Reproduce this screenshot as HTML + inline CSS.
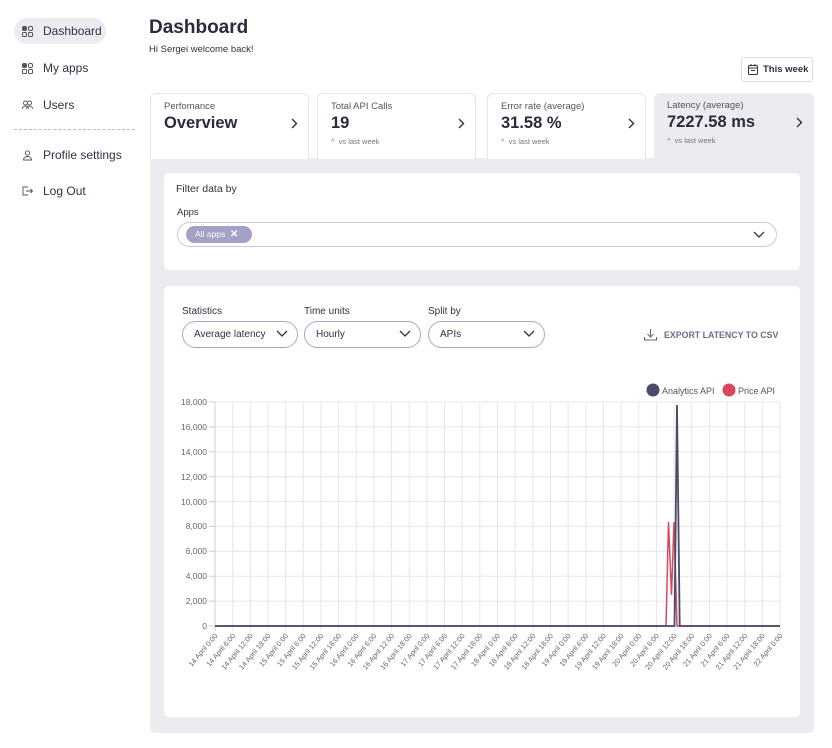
<!DOCTYPE html>
<html><head><meta charset="utf-8"><style>
*{box-sizing:border-box;margin:0;padding:0}
body{width:832px;height:748px;background:#fff;font-family:"Liberation Sans",sans-serif;color:#2f3142;position:relative;overflow:hidden}
.a{position:absolute}
.nav{position:absolute;left:14px;height:26px;width:92px;font-size:12px;color:#2f3142;display:flex;align-items:center;padding-left:8px;white-space:nowrap}
.nav svg{margin-right:10px}
.card{position:absolute;top:93px;height:66px;background:#fff;border:1px solid #e4e5ea;border-bottom:none;border-radius:6px 6px 0 0}
.card .t{position:absolute;left:13px;top:7px;font-size:9.5px;color:#555}
.card .v{position:absolute;left:13px;top:20px;font-size:16.5px;font-weight:bold;color:#2a2c3c}
.card .s{position:absolute;left:13px;top:43px;font-size:7.5px;color:#777}
.card .c{position:absolute;right:10px;top:24px}
.sel{position:absolute;top:321px;height:27px;border:1px solid #a9a6cc;border-radius:14px;font-size:10px;color:#2f3142;padding:7px 0 0 11px}
.sel svg{position:absolute;right:9px;top:8px}
.lbl{position:absolute;top:306px;font-size:10px;color:#2f3142}
</style></head><body>
<div class="nav" style="top:18px;background:#ebecf2;border-radius:13px">
<svg width="11" height="11" viewBox="0 0 11 11" fill="none" stroke="#555" stroke-width="1"><rect x=".5" y=".5" width="4" height="4" rx="1.5" fill="#555"/><rect x="6.5" y=".5" width="4" height="4" rx="1.5"/><rect x=".5" y="6.5" width="4" height="4" rx="1"/><rect x="6.5" y="6.5" width="4" height="4" rx="1"/></svg>Dashboard</div>
<div class="nav" style="top:55px">
<svg width="11" height="11" viewBox="0 0 11 11" fill="none" stroke="#555" stroke-width="1"><rect x=".5" y=".5" width="4" height="4" rx="1.5" fill="#555"/><rect x="6.5" y=".5" width="4" height="4" rx="1.5"/><rect x=".5" y="6.5" width="4" height="4" rx="1"/><rect x="6.5" y="6.5" width="4" height="4" rx="1"/></svg>My apps</div>
<div class="nav" style="top:92px">
<svg width="11" height="10" viewBox="0 0 11 10" fill="none" stroke="#555" stroke-width="0.9"><circle cx="3.5" cy="3" r="2"/><circle cx="7.5" cy="3" r="2"/><path d="M.5 9c0-2 1.5-3 3-3s3 1 3 3M4.5 9c0-2 1.5-3 3-3s3 1 3 3"/></svg>Users</div>
<div class="a" style="left:14px;top:129px;width:121px;border-top:1px dashed #bbb"></div>
<div class="nav" style="top:142px;width:130px">
<svg width="11" height="11" viewBox="0 0 11 11" fill="none" stroke="#555" stroke-width="0.9"><circle cx="5.5" cy="3" r="2.2"/><path d="M1.5 10c0-2.5 2-3.5 4-3.5s4 1 4 3.5z"/></svg>Profile settings</div>
<div class="nav" style="top:178px">
<svg width="11" height="10" viewBox="0 0 11 10" fill="none" stroke="#555" stroke-width="0.9"><path d="M6 1H1v8h5M4 5h6.5M8.5 3l2 2-2 2"/></svg>Log Out</div>

<div class="a" style="left:149px;top:17px;font-size:19px;font-weight:bold;color:#2a2c3c">Dashboard</div>
<div class="a" style="left:149px;top:44px;font-size:9.5px;color:#2f3142">Hi Sergei welcome back!</div>
<div class="a" style="left:741px;top:57px;width:72px;height:25px;border:1px solid #ddd;border-radius:3px;font-size:9.5px;font-weight:bold;padding:6px 0 0 21px">
<svg class="a" style="left:6px;top:6px" width="10" height="11" viewBox="0 0 10 11" fill="none" stroke="#333" stroke-width="1"><rect x=".5" y="1.5" width="9" height="9" rx="1"/><path d="M.5 4h9M3 6.5h4M3 0v2M7 0v2"/></svg>This week</div>

<div class="a" style="left:150px;top:158px;width:664px;height:575px;background:#ebecf0;border-radius:0 0 5px 5px"></div>
<div class="a" style="left:654px;top:93px;width:160px;height:66px;background:#ebecf0;border-radius:6px 6px 0 0"></div>
<div class="card" style="left:150px;width:159px"><div class="t">Perfomance</div><div class="v">Overview</div><svg class="c" width="7" height="11" viewBox="0 0 7 11" fill="none" stroke="#333" stroke-width="1.4"><path d="M1 1l4.5 4.5L1 10"/></svg></div>
<div class="card" style="left:317px;width:159px"><div class="t">Total API Calls</div><div class="v">19</div><div class="s">^ &nbsp;vs last week</div><svg class="c" width="7" height="11" viewBox="0 0 7 11" fill="none" stroke="#333" stroke-width="1.4"><path d="M1 1l4.5 4.5L1 10"/></svg></div>
<div class="card" style="left:487px;width:159px"><div class="t">Error rate (average)</div><div class="v">31.58 %</div><div class="s">^ &nbsp;vs last week</div><svg class="c" width="7" height="11" viewBox="0 0 7 11" fill="none" stroke="#333" stroke-width="1.4"><path d="M1 1l4.5 4.5L1 10"/></svg></div>
<div class="card" style="left:654px;width:159px;background:transparent;border:none"><div class="t">Latency (average)</div><div class="v">7227.58 ms</div><div class="s">^ &nbsp;vs last week</div><svg class="c" width="7" height="11" viewBox="0 0 7 11" fill="none" stroke="#333" stroke-width="1.4"><path d="M1 1l4.5 4.5L1 10"/></svg></div>

<div class="a" style="left:164px;top:173px;width:636px;height:97px;background:#fff;border-radius:5px"></div>
<div class="a" style="left:176px;top:183px;font-size:10.5px;color:#2f3142">Filter data by</div>
<div class="a" style="left:177px;top:207px;font-size:9.5px;color:#2f3142">Apps</div>
<div class="a" style="left:177px;top:222px;width:600px;height:25px;border:1px solid #c9c7e0;border-radius:13px"></div>
<div class="a" style="left:186px;top:226px;width:66px;height:17px;background:#a3a1c6;border-radius:9px;color:#fff;font-size:8.5px;padding:3px 0 0 9px">All apps &nbsp;<b style="font-size:10px">✕</b></div>
<svg class="a" style="left:753px;top:231px" width="12" height="7" viewBox="0 0 12 7" fill="none" stroke="#333" stroke-width="1.3"><path d="M1 1l5 5 5-5"/></svg>

<div class="a" style="left:164px;top:286px;width:636px;height:431px;background:#fff;border-radius:5px"></div>
<div class="lbl" style="left:182px">Statistics</div>
<div class="lbl" style="left:304px">Time units</div>
<div class="lbl" style="left:428px">Split by</div>
<div class="sel" style="left:182px;width:116px">Average latency<svg width="12" height="7" viewBox="0 0 12 7" fill="none" stroke="#333" stroke-width="1.3"><path d="M1 1l5 5 5-5"/></svg></div>
<div class="sel" style="left:304px;width:117px">Hourly<svg width="12" height="7" viewBox="0 0 12 7" fill="none" stroke="#333" stroke-width="1.3"><path d="M1 1l5 5 5-5"/></svg></div>
<div class="sel" style="left:428px;width:117px">APIs<svg width="12" height="7" viewBox="0 0 12 7" fill="none" stroke="#333" stroke-width="1.3"><path d="M1 1l5 5 5-5"/></svg></div>
<svg class="a" style="left:644px;top:328px" width="13" height="13" viewBox="0 0 13 13" fill="none" stroke="#666" stroke-width="1"><path d="M6.5 1v8M3.5 6l3 3 3-3M.5 9v3h12V9"/></svg>
<div class="a" style="left:664px;top:330px;font-size:8.8px;font-weight:bold;color:#6e6c8a">EXPORT LATENCY TO CSV</div>

<svg class="a" style="left:0;top:0" width="832" height="748" font-family="Liberation Sans, sans-serif">
<g stroke="#e6e6e6" stroke-width="1">
<path d="M215 402H780M215 426.9H780M215 451.8H780M215 476.7H780M215 501.6H780M215 526.4H780M215 551.3H780M215 576.2H780M215 601.1H780"/>
<path d="M232.7 402V631M250.3 402V631M268 402V631M285.6 402V631M303.3 402V631M320.9 402V631M338.6 402V631M356.2 402V631M373.9 402V631M391.6 402V631M409.2 402V631M426.9 402V631M444.5 402V631M462.2 402V631M479.8 402V631M497.5 402V631M515.2 402V631M532.8 402V631M550.5 402V631M568.1 402V631M585.8 402V631M603.4 402V631M621.1 402V631M638.7 402V631M656.4 402V631M674.1 402V631M691.7 402V631M709.4 402V631M727 402V631M744.7 402V631M762.3 402V631M780 402V631"/>
<path d="M209 402H215M209 426.9H215M209 451.8H215M209 476.7H215M209 501.6H215M209 526.4H215M209 551.3H215M209 576.2H215M209 601.1H215M209 626H215" stroke="#ccc"/>
<path d="M215 402V631" stroke="#ccc"/>
</g>
<g font-size="8.5" fill="#666" text-anchor="end">
<text x="207" y="405">18,000</text><text x="207" y="430">16,000</text><text x="207" y="455">14,000</text><text x="207" y="480">12,000</text><text x="207" y="505">10,000</text><text x="207" y="529">8,000</text><text x="207" y="554">6,000</text><text x="207" y="579">4,000</text><text x="207" y="604">2,000</text><text x="207" y="629">0</text>
</g>
<g font-size="7.3" fill="#666" text-anchor="end">
<text transform="translate(218,636) rotate(-50)">14 April 0:00</text>
<text transform="translate(235.7,636) rotate(-50)">14 April 6:00</text>
<text transform="translate(253.3,636) rotate(-50)">14 April 12:00</text>
<text transform="translate(271,636) rotate(-50)">14 April 18:00</text>
<text transform="translate(288.6,636) rotate(-50)">15 April 0:00</text>
<text transform="translate(306.3,636) rotate(-50)">15 April 6:00</text>
<text transform="translate(323.9,636) rotate(-50)">15 April 12:00</text>
<text transform="translate(341.6,636) rotate(-50)">15 April 18:00</text>
<text transform="translate(359.2,636) rotate(-50)">16 April 0:00</text>
<text transform="translate(376.9,636) rotate(-50)">16 April 6:00</text>
<text transform="translate(394.6,636) rotate(-50)">16 April 12:00</text>
<text transform="translate(412.2,636) rotate(-50)">16 April 18:00</text>
<text transform="translate(429.9,636) rotate(-50)">17 April 0:00</text>
<text transform="translate(447.5,636) rotate(-50)">17 April 6:00</text>
<text transform="translate(465.2,636) rotate(-50)">17 April 12:00</text>
<text transform="translate(482.8,636) rotate(-50)">17 April 18:00</text>
<text transform="translate(500.5,636) rotate(-50)">18 April 0:00</text>
<text transform="translate(518.2,636) rotate(-50)">18 April 6:00</text>
<text transform="translate(535.8,636) rotate(-50)">18 April 12:00</text>
<text transform="translate(553.5,636) rotate(-50)">18 April 18:00</text>
<text transform="translate(571.1,636) rotate(-50)">19 April 0:00</text>
<text transform="translate(588.8,636) rotate(-50)">19 April 6:00</text>
<text transform="translate(606.4,636) rotate(-50)">19 April 12:00</text>
<text transform="translate(624.1,636) rotate(-50)">19 April 18:00</text>
<text transform="translate(641.7,636) rotate(-50)">20 April 0:00</text>
<text transform="translate(659.4,636) rotate(-50)">20 April 6:00</text>
<text transform="translate(677.1,636) rotate(-50)">20 April 12:00</text>
<text transform="translate(694.7,636) rotate(-50)">20 April 18:00</text>
<text transform="translate(712.4,636) rotate(-50)">21 April 0:00</text>
<text transform="translate(730,636) rotate(-50)">21 April 6:00</text>
<text transform="translate(747.7,636) rotate(-50)">21 April 12:00</text>
<text transform="translate(765.3,636) rotate(-50)">21 April 18:00</text>
<text transform="translate(783,636) rotate(-50)">22 April 0:00</text>
</g>
<path d="M215 626H666L668.5 522L671.5 595L674 522L677 626H780" fill="none" stroke="#d9475e" stroke-width="1.5"/>
<path d="M215 626H674.5L677 405L679.7 626H780" fill="none" stroke="#4a4a6a" stroke-width="1.8"/>
<circle cx="653" cy="390" r="6.5" fill="#4a4a6a"/>
<text x="662" y="394" font-size="9" fill="#555">Analytics API</text>
<circle cx="729" cy="390" r="6.5" fill="#d9475e"/>
<text x="738" y="394" font-size="9" fill="#555">Price API</text>
</svg>
</body></html>
